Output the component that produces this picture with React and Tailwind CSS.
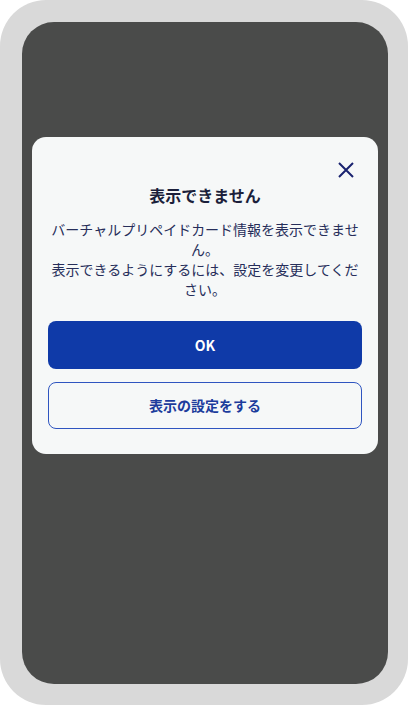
export default function App() {
  return (
    <div className="w-[408px] h-[705px] bg-white" style={{ fontFamily: '"Noto Sans CJK JP", "Noto Sans", sans-serif' }}>
      <div className="w-full h-full bg-[#d9d9d9] rounded-[46px] pt-[22px] pl-[22px] pr-[20px] pb-[21px]">
        <div className="w-full h-full bg-[#4a4b4a] rounded-[32px] pt-[115px] px-[10px]">
          <div className="bg-[#f6f8f8] rounded-[14px] px-4 pt-[25px] pb-[25px]">
            <div className="flex justify-end pr-2 h-4">
              <svg width="16" height="16" viewBox="0 0 16 16" fill="none">
                <path d="M1 1L15 15M15 1L1 15" stroke="#1a2370" strokeWidth="2" />
              </svg>
            </div>
            <div className="mt-[7px] text-center text-[16px] leading-[20px] font-bold text-[#1b1f3b]">
              表示できません
            </div>
            <div className="mt-[14px] text-center text-[14px] leading-[20px] text-[#262e5a]">
              バーチャルプリペイドカード情報を表示できません。
              <br />
              表示できるようにするには、設定を変更してください。
            </div>
            <button className="mt-[22px] w-full h-[48px] rounded-[8px] bg-[#0f3aa8] text-white text-[14px] font-semibold flex items-center justify-center">
              OK
            </button>
            <button className="mt-[13px] w-full h-[47px] rounded-[8px] border border-[#2f55c0] bg-transparent text-[#1c3c9c] text-[14px] font-semibold flex items-center justify-center">
              表示の設定をする
            </button>
          </div>
        </div>
      </div>
    </div>
  );
}
